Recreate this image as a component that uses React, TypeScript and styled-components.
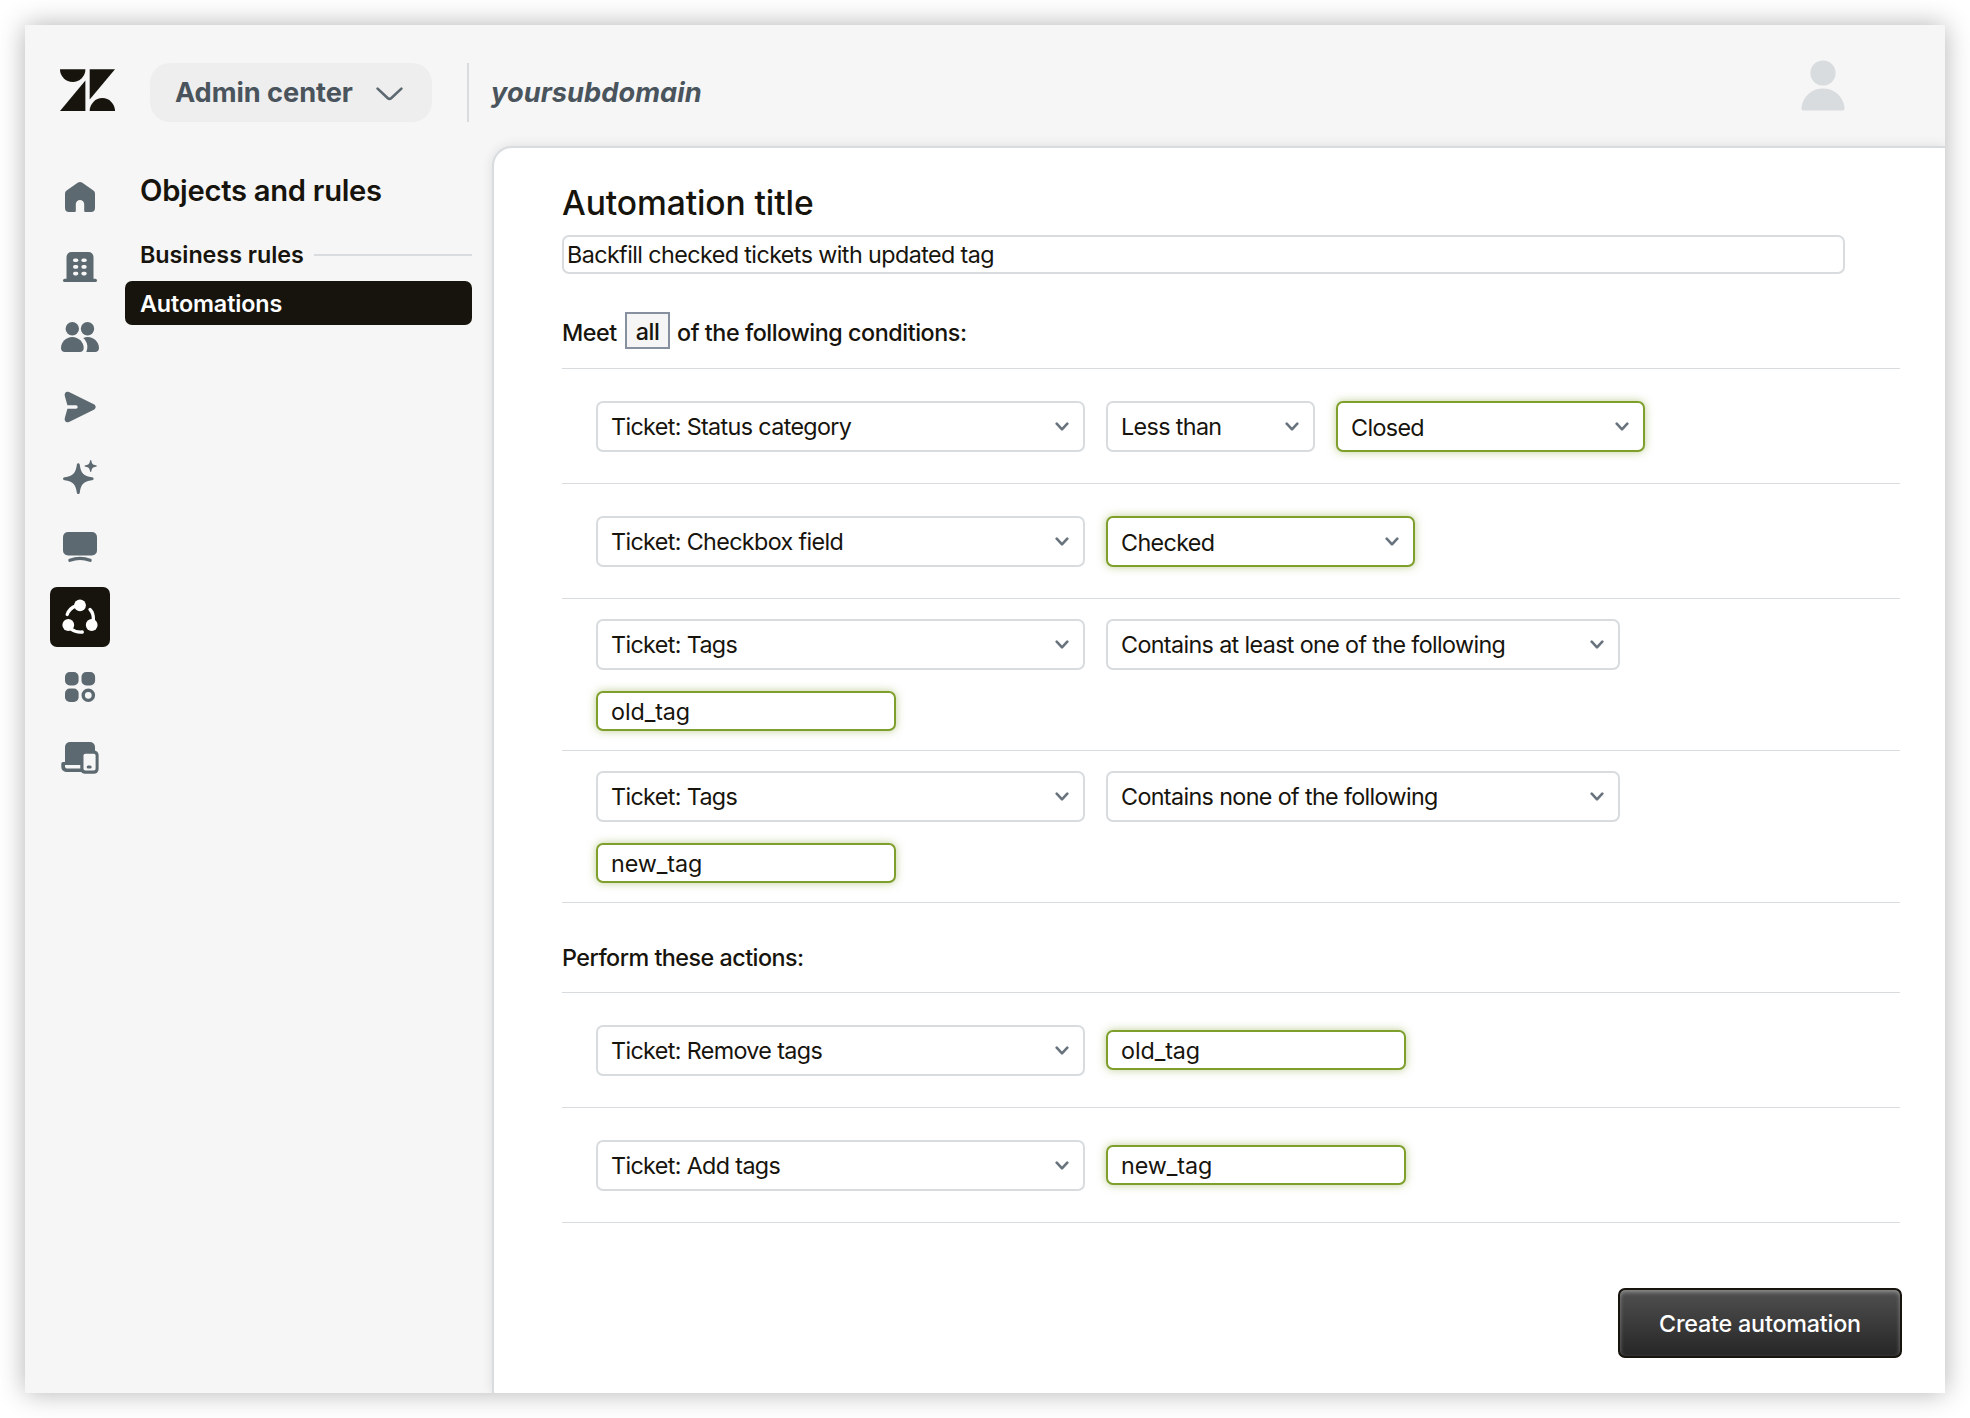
import React from 'react';
import styled, { createGlobalStyle, css } from 'styled-components';

const color = {
  ink: '#17140d',
  slate: '#5c6970',
  slateDark: '#49545c',
  border: '#d8dcde',
  chrome: '#f6f6f6',
  green: '#7f9f2c',
};

const GlobalStyle = createGlobalStyle`
  *, *::before, *::after { box-sizing: border-box; }
  body {
    margin: 0;
    background: #fff;
    color: ${color.ink};
    font-family: Inter, 'Liberation Sans', sans-serif;
    font-size: 23.3px;
    line-height: 30px;
  }
  button, input { font: inherit; color: inherit; }
`;

const Page = styled.div`
  height: 1418px;
  padding: 25px;
`;

const Window = styled.div`
  display: flex;
  flex-direction: column;
  height: 1368px;
  background: ${color.chrome};
  box-shadow: 0 0 25px rgba(0, 0, 0, 0.3);
`;

/* ---------- header ---------- */

const Header = styled.header`
  display: flex;
  align-items: center;
  height: 121px;
  padding: 14px 100px 0 35px;
`;

const Logo = styled.svg`
  width: 55px;
  height: 42px;
  margin-bottom: 5px;
`;

const ProductButton = styled.button`
  display: flex;
  align-items: center;
  justify-content: space-between;
  width: 282px;
  height: 59px;
  margin-left: 35px;
  padding: 0 29px 0 25px;
  border: 0;
  border-radius: 20px;
  background: #eee;
  color: ${color.slateDark};
  font-size: 27.2px;
  font-weight: 650;
  letter-spacing: -0.05px;
`;

const ProductChevron = styled.svg`
  width: 27px;
  height: 14px;
  margin-top: 3px;
`;

const HeaderDivider = styled.div`
  width: 2px;
  height: 59px;
  margin-left: 35px;
  background: ${color.border};
`;

const Subdomain = styled.div`
  margin-left: 22px;
  color: ${color.slateDark};
  font-size: 27.2px;
  font-style: italic;
  font-weight: 650;
  letter-spacing: 0.05px;
`;

const Avatar = styled.svg`
  width: 44px;
  height: 51px;
  margin: 0 0 14px auto;
`;

/* ---------- navigation ---------- */

const Body = styled.div`
  display: flex;
  flex: 1;
  min-height: 0;
  overflow: hidden;
  margin-top: -20px;
  padding-top: 20px;
`;

const Rail = styled.nav`
  display: flex;
  flex-direction: column;
  gap: 10px;
  width: 85px;
  padding: 21px 0 0 25px;
`;

const RailItem = styled.div<{ $active?: boolean }>`
  width: 60px;
  height: 60px;
  border-radius: 7px;
  background: ${(p) => (p.$active ? color.ink : 'transparent')};
  color: ${(p) => (p.$active ? '#fff' : color.slate)};
`;

const RailIcon = styled.svg`
  display: block;
  width: 60px;
  height: 60px;
`;

const SideNav = styled.aside`
  display: flex;
  flex-direction: column;
  width: 347px;
  margin: 0 20px 0 15px;
  padding-top: 27px;
`;

const SideTitle = styled.h2`
  margin: 0;
  padding-left: 15px;
  font-size: 29.2px;
  font-weight: 620;
  line-height: 36px;
  letter-spacing: -0.28px;
`;

const SideGroup = styled.div`
  display: flex;
  align-items: center;
  gap: 10px;
  height: 31px;
  margin-top: 30px;
  padding-left: 15px;
  font-weight: 620;
  letter-spacing: -0.03px;

  &::after {
    content: '';
    flex: 1;
    height: 2px;
    background: ${color.border};
  }
`;

const SideLink = styled.a`
  display: flex;
  align-items: center;
  height: 44px;
  margin-top: 11px;
  padding: 1px 0 0 15px;
  border-radius: 7px;
  background: ${color.ink};
  color: #fff;
  font-weight: 560;
  letter-spacing: -0.1px;
`;

/* ---------- form ---------- */

const Panel = styled.main`
  display: flex;
  flex: 1;
  flex-direction: column;
  padding: 35px 45px 0 68px;
  border: solid ${color.border};
  border-width: 2px 0 0 2px;
  border-radius: 20px 0 0 0;
  background: #fff;
  box-shadow: 0 0 12px rgba(0, 0, 0, 0.1);
`;

const Title = styled.h1`
  margin: 0;
  font-size: 33.6px;
  font-weight: 500;
  line-height: 40px;
  letter-spacing: -0.1px;
`;

const TitleInput = styled.input`
  width: 1283px;
  height: 39px;
  margin-top: 12px;
  padding: 0 3px;
  border: 2px solid ${color.border};
  border-radius: 7px;
  background: #fff;
  letter-spacing: -0.58px;
`;

const MatchLine = styled.div`
  display: flex;
  align-items: center;
  height: 37px;
  margin: 38px 0 19px;
  font-weight: 500;
  letter-spacing: -0.44px;
`;

const MatchText = styled.span<{ $width?: number }>`
  width: ${(p) => (p.$width ? `${p.$width}px` : 'auto')};
  padding-top: 4px;
`;

const MatchMode = styled.span`
  display: flex;
  align-items: center;
  justify-content: center;
  width: 45px;
  height: 37px;
  margin-right: 7px;
  padding-top: 2px;
  border: 2px solid #87909e;
  background: #f5f5f5;
`;

const RuleList = styled.div`
  border-top: 1px solid ${color.border};
`;

const Rule = styled.div<{ $stacked?: boolean }>`
  display: flex;
  flex-direction: column;
  gap: 21px;
  padding: ${(p) => (p.$stacked ? '20px 0 19px 34px' : '32px 0 31px 34px')};
  border-bottom: 1px solid ${color.border};
`;

const RuleLine = styled.div`
  display: flex;
  align-items: center;
  gap: 21px;
`;

const highlight = css`
  border-color: ${color.green};
  box-shadow: 0 0 8px rgba(127, 159, 44, 0.5);
`;

const SelectBox = styled.div<{ $width: number; $highlighted?: boolean }>`
  display: flex;
  align-items: center;
  justify-content: space-between;
  width: ${(p) => p.$width}px;
  height: 51px;
  padding: ${(p) => (p.$highlighted ? '2px 14px 0 13px' : '0 14px 0 13px')};
  border: 2px solid ${color.border};
  border-radius: 7px;
  background: #fff;
  letter-spacing: -0.63px;
  white-space: nowrap;
  ${(p) => p.$highlighted && highlight}
`;

const SelectArrow = styled.svg<{ $raised?: boolean }>`
  width: 14px;
  height: 10px;
  margin-bottom: ${(p) => (p.$raised ? '2px' : 0)};
`;

const TagInput = styled.input`
  width: 300px;
  height: 40px;
  padding: 1px 12px 0 13px;
  border: 2px solid;
  border-radius: 7px;
  background: #fff;
  letter-spacing: -0.08px;
  ${highlight}

  ${SelectBox} + & {
    margin-bottom: 1px;
  }
`;

const ActionsHeading = styled.h3`
  display: flex;
  align-items: center;
  height: 89px;
  margin: 0;
  padding-top: 20px;
  font-size: inherit;
  font-weight: 500;
  letter-spacing: -0.5px;
`;

const SubmitButton = styled.button`
  align-self: flex-end;
  width: 284px;
  height: 70px;
  margin: 65px -2px 0 0;
  padding: 2px 0 0;
  border: 2px solid ${color.ink};
  border-radius: 7px;
  background: linear-gradient(#505050, #262626);
  box-shadow: inset 0 2px 4px rgba(255, 255, 255, 0.38);
  color: #fff;
  font-weight: 450;
  letter-spacing: -0.2px;
`;

function Select({ width, highlighted, children }: { width: number; highlighted?: boolean; children: React.ReactNode }) {
  return (
    <SelectBox $width={width} $highlighted={highlighted}>
      {children}
      <SelectArrow
        $raised={highlighted}
        viewBox="0 0 14 10"
        fill="none"
        stroke="#68737d"
        strokeWidth="2.6"
        strokeLinecap="round"
        strokeLinejoin="round"
      >
        <path d="M1.7 1.7 7 7.4l5.3-5.7" />
      </SelectArrow>
    </SelectBox>
  );
}

const home = (
  <path d="M15 26.5Q15 24.7 16.6 23.6L28 15.6Q30 14.3 32 15.6L43.4 23.6Q45 24.7 45 26.5V41a4 4 0 0 1-4 4h-5.8a1 1 0 0 1-1-1v-6.8a4.2 4.2 0 0 0-8.4 0V44a1 1 0 0 1-1 1H19a4 4 0 0 1-4-4Z" />
);

const building = (
  <>
    <path d="M16.5 43V20a5 5 0 0 1 5-5h17a5 5 0 0 1 5 5v23Z" />
    <rect x="13" y="41.7" width="34" height="3.4" rx="1.7" />
    {[21.4, 28.1, 34.8].map((y) => (
      <g key={y} fill={color.chrome}>
        <rect x="23" y={y} width="5.3" height="3.6" rx="1.8" />
        <rect x="31.4" y={y} width="5.3" height="3.6" rx="1.8" />
      </g>
    ))}
  </>
);

const people = (
  <>
    <circle cx="22.3" cy="21.7" r="6.7" />
    <circle cx="37.5" cy="21.7" r="6.7" />
    <path d="M22.3 30C28.5 30 33.7 35 33.7 41C33.7 43.5 32 45 30 45H14.8C12.5 45 11 43.5 11 41C11 35 16 30 22.3 30Z" />
    <path d="M33.2 30.9C34.8 30.2 36.3 30 37.7 30C44 30 49 35 49 41C49 43.5 47.3 45 45.2 45H36.3C37.2 42.6 37.5 40.6 37.3 38.5C36.9 35.3 35.5 33 33.2 30.9Z" />
  </>
);

const send = (
  <path d="M14.8 19C14 16 16.3 13.8 19 15.1L43.8 27.2C46.3 28.5 46.3 31.5 43.8 32.8L19 44.9C16.3 46.2 14 44 14.8 41L17.4 31.7H26A1.7 1.7 0 0 0 26 28.3H17.4Z" />
);

const sparkles = (
  <>
    <path d="M26.8 18C27 15.8 29.6 15.8 29.8 18C31 26.5 33.5 29 42 30.2C44.2 30.4 44.2 33 42 33.2C33.5 34.4 31 37 29.8 45.4C29.6 47.6 27 47.6 26.8 45.4C25.6 37 23 34.4 14.7 33.2C12.5 33 12.5 30.4 14.7 30.2C23 29 25.6 26.5 26.8 18Z" />
    <path d="M40 14C40.1 12.6 41.3 12.6 41.4 14C42 17 42.7 17.7 45.8 18.3C47.2 18.4 47.2 19.6 45.8 19.7C42.7 20.3 42 21 41.4 24C41.3 25.4 40.1 25.4 40 24C39.4 21 38.7 20.3 35.6 19.7C34.2 19.6 34.2 18.4 35.6 18.3C38.7 17.7 39.4 17 40 14Z" />
  </>
);

const monitor = (
  <>
    <rect x="13" y="15" width="34" height="23.4" rx="5" />
    <path d="M19.9 43.3C26 41 34 41 40.1 43.3" fill="none" stroke="currentColor" strokeWidth="3.3" strokeLinecap="round" />
  </>
);

const objects = (
  <>
    <circle cx="30" cy="18.3" r="5.9" />
    <circle cx="18.3" cy="38" r="5.9" />
    <circle cx="41.7" cy="38" r="5.9" />
    <g fill="none" stroke="currentColor" strokeWidth="3.3" strokeLinecap="round">
      <path d="M17.2 27.5C18.6 23.5 22 20.3 26 18.9" />
      <path d="M40 22.5C42.5 25 43.6 28.5 43.4 33" />
      <path d="M21 42C24 44.4 28 45.3 32.3 45" />
    </g>
  </>
);

const apps = (
  <>
    <rect x="15" y="15" width="13.6" height="13.5" rx="4.8" />
    <rect x="31.5" y="15" width="13.6" height="13.5" rx="4.8" />
    <rect x="15" y="31.5" width="13.6" height="13.5" rx="4.8" />
    <circle cx="38.3" cy="38.3" r="5.1" fill="none" stroke="currentColor" strokeWidth="3.4" />
  </>
);

const devices = (
  <>
    <path d="M15 36V20a5 5 0 0 1 5-5h20a5 5 0 0 1 5 5v16Z" />
    <path d="M11.3 36.7a1.7 1.7 0 0 1 1.7-1.7H33V45H16.3a5 5 0 0 1-5-5Z" />
    <path d="M15 38H31V41.4H16.5Q15 41 15 39.5Z" fill={color.chrome} />
    <rect x="30.3" y="23.4" width="18.3" height="23.4" rx="4.8" />
    <rect x="33.5" y="26.7" width="12.1" height="16.8" rx="1.8" fill={color.chrome} />
    <rect x="36.7" y="38.4" width="5" height="3" rx="1.5" />
  </>
);

const railItems = [
  { name: 'Home', icon: home },
  { name: 'Account', icon: building },
  { name: 'People', icon: people },
  { name: 'Channels', icon: send },
  { name: 'AI', icon: sparkles },
  { name: 'Workspaces', icon: monitor },
  { name: 'Objects and rules', icon: objects, active: true },
  { name: 'Apps and integrations', icon: apps },
  { name: 'Devices', icon: devices },
];

export default function App() {
  return (
    <Page>
      <GlobalStyle />
      <Window>
        <Header>
          <Logo viewBox="0 0 55 42" fill={color.ink}>
            <path d="M0 .2H25.4A12.7 12.7 0 0 1 0 .2Z" />
            <path d="M29.7 .2H55L29.7 30.6Z" />
            <path d="M25.4 11.5V42H0Z" />
            <path d="M29.7 42A12.65 12.9 0 0 1 55 42Z" />
          </Logo>
          <ProductButton>
            Admin center
            <ProductChevron viewBox="0 0 27 14" fill="none" stroke={color.slate} strokeWidth="2.6" strokeLinecap="round">
              <path d="M1.6 1.6 11.6 11Q13.5 12.7 15.4 11L25.4 1.6" />
            </ProductChevron>
          </ProductButton>
          <HeaderDivider />
          <Subdomain>yoursubdomain</Subdomain>
          <Avatar viewBox="0 0 44 51" fill={color.border}>
            <circle cx="22" cy="13" r="12.6" />
            <path d="M.4 48C2 36 11 28.6 22 28.6S42 36 43.6 48Q43.7 50.5 41.4 50.5H2.6Q.3 50.5 .4 48Z" />
          </Avatar>
        </Header>
        <Body>
          <Rail>
            {railItems.map((item) => (
              <RailItem key={item.name} $active={item.active}>
                <RailIcon viewBox="0 0 60 60" fill="currentColor">
                  {item.icon}
                </RailIcon>
              </RailItem>
            ))}
          </Rail>
          <SideNav>
            <SideTitle>Objects and rules</SideTitle>
            <SideGroup>Business rules</SideGroup>
            <SideLink>Automations</SideLink>
          </SideNav>
          <Panel>
            <Title>Automation title</Title>
            <TitleInput defaultValue="Backfill checked tickets with updated tag" />
            <MatchLine>
              <MatchText $width={63}>Meet</MatchText>
              <MatchMode>all</MatchMode>
              <MatchText>of the following conditions:</MatchText>
            </MatchLine>
            <RuleList>
              <Rule>
                <RuleLine>
                  <Select width={489}>Ticket: Status category</Select>
                  <Select width={209}>Less than</Select>
                  <Select width={309} highlighted>Closed</Select>
                </RuleLine>
              </Rule>
              <Rule>
                <RuleLine>
                  <Select width={489}>Ticket: Checkbox field</Select>
                  <Select width={309} highlighted>Checked</Select>
                </RuleLine>
              </Rule>
              <Rule $stacked>
                <RuleLine>
                  <Select width={489}>Ticket: Tags</Select>
                  <Select width={514}>Contains at least one of the following</Select>
                </RuleLine>
                <RuleLine>
                  <TagInput defaultValue="old_tag" />
                </RuleLine>
              </Rule>
              <Rule $stacked>
                <RuleLine>
                  <Select width={489}>Ticket: Tags</Select>
                  <Select width={514}>Contains none of the following</Select>
                </RuleLine>
                <RuleLine>
                  <TagInput defaultValue="new_tag" />
                </RuleLine>
              </Rule>
            </RuleList>
            <ActionsHeading>Perform these actions:</ActionsHeading>
            <RuleList>
              <Rule>
                <RuleLine>
                  <Select width={489}>Ticket: Remove tags</Select>
                  <TagInput defaultValue="old_tag" />
                </RuleLine>
              </Rule>
              <Rule>
                <RuleLine>
                  <Select width={489}>Ticket: Add tags</Select>
                  <TagInput defaultValue="new_tag" />
                </RuleLine>
              </Rule>
            </RuleList>
            <SubmitButton>Create automation</SubmitButton>
          </Panel>
        </Body>
      </Window>
    </Page>
  );
}
